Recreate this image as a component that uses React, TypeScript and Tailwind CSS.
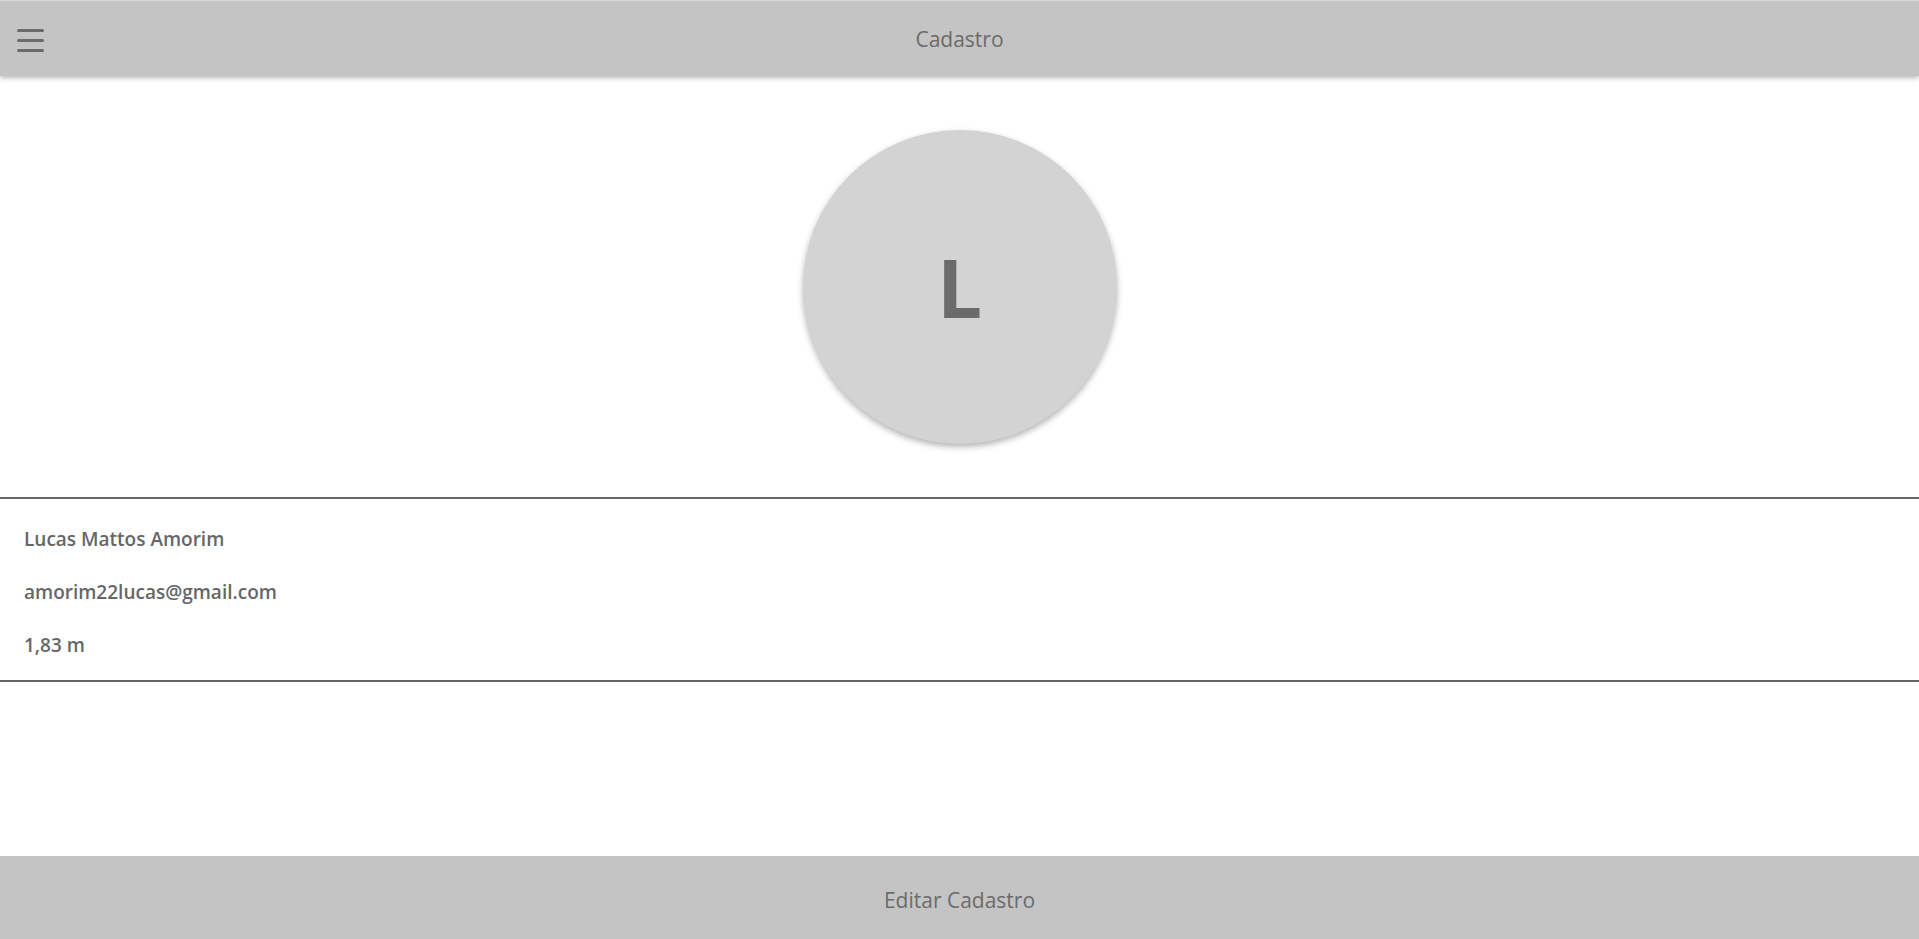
const font = { fontFamily: '"Open Sans", "Noto Sans", sans-serif' };

const InfoRow = ({ text }: { text: string }) => (
  <p className="h-[53px] leading-[53px] px-6 text-[19px] font-semibold text-[#666666]">
    {text}
  </p>
);

const App = () => {
  return (
    <div className="flex flex-col h-screen bg-white" style={font}>
      <header className="relative h-[76px] shrink-0 bg-[#c4c4c4] border-t border-[#d6d6d6] shadow-[0_2px_5px_rgba(0,0,0,0.28)] flex items-center justify-center pt-[2px] z-10">
        <button className="absolute left-[17px] top-[28px] flex flex-col gap-[7px]">
          <span className="block w-[27px] h-[3px] rounded-full bg-[#6b6b6b]" />
          <span className="block w-[27px] h-[3px] rounded-full bg-[#6b6b6b]" />
          <span className="block w-[27px] h-[3px] rounded-full bg-[#6b6b6b]" />
        </button>
        <h1 className="text-[21px] text-[#6b6b6b]">Cadastro</h1>
      </header>

      <main className="flex flex-col">
        <div className="flex justify-center mt-[54px]">
          <div className="w-[314px] h-[314px] rounded-full bg-[#d3d3d3] shadow-[0_3px_6px_rgba(0,0,0,0.3)] flex items-center justify-center">
            <span className="text-[80px] font-bold text-[#6b6b6b] leading-none">L</span>
          </div>
        </div>

        <section className="mt-[53px] border-t-2 border-b-2 border-[#666666] pt-[14px] pb-[8px]">
          <InfoRow text="Lucas Mattos Amorim" />
          <InfoRow text="amorim22lucas@gmail.com" />
          <InfoRow text="1,83 m" />
        </section>
      </main>

      <footer className="mt-auto h-[83px] shrink-0 bg-[#c4c4c4] flex items-center justify-center pt-[6px]">
        <button className="text-[21px] text-[#6b6b6b]">Editar Cadastro</button>
      </footer>
    </div>
  );
};

export default App;
